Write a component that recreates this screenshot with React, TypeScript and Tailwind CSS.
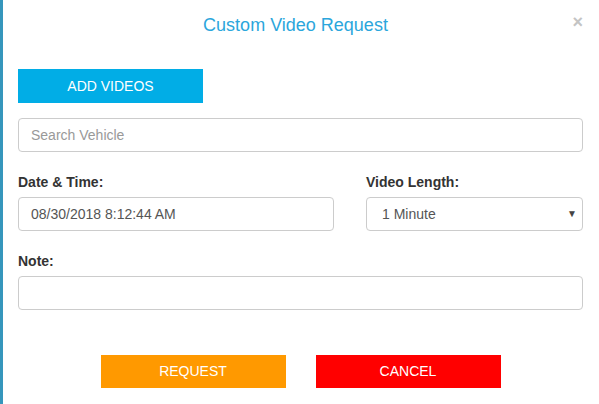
import React from 'react';

const inputCls =
    'w-full h-[34px] rounded-[4px] border border-[#cccccc] bg-white px-3 text-[14px] text-[#555555] placeholder:text-[#999999] outline-none';

const labelCls = 'block text-[14px] leading-[20px] font-bold text-[#333333] mb-[5px]';

const App: React.FC = () => {
    return (
        <div className="flex w-[599px] h-[404px] bg-white overflow-hidden" style={{ fontFamily: '"Liberation Sans", Arial, sans-serif' }}>
            {/* left edge of the page behind the modal */}
            <div className="w-[3px] shrink-0 bg-[#3596bc]" />

            <div className="flex-1 pl-[15px] pr-[16px]">
                {/* Header */}
                <div className="relative h-[50px] flex items-center justify-center">
                    <h4 className="mr-[10px] text-[18px] text-[#2ba6dc] font-normal">Custom Video Request</h4>
                    <button className="absolute right-[0px] top-[13px] text-[18px] leading-none font-bold text-[#c4c4c4]" aria-label="Close">
                        ×
                    </button>
                </div>

                <button className="mt-[19px] w-[185px] h-[34px] bg-[#01ade6] text-white text-[14px]">ADD VIDEOS</button>

                <div className="mt-[15px]">
                    <input className={inputCls} placeholder="Search Vehicle" />
                </div>

                <div className="mt-[20px] flex gap-[32px]">
                    <div className="w-[316px]">
                        <label className={labelCls}>Date &amp; Time:</label>
                        <input className={inputCls} defaultValue="08/30/2018 8:12:44 AM" />
                    </div>
                    <div className="flex-1">
                        <label className={labelCls}>Video Length:</label>
                        <div className="relative">
                            <select className={`${inputCls} appearance-none pl-[15px]`} defaultValue="1">
                                <option value="1">1 Minute</option>
                                <option value="2">2 Minutes</option>
                            </select>
                            <span className="pointer-events-none absolute right-[6px] top-[9px] text-[10px] text-[#444444]">▼</span>
                        </div>
                    </div>
                </div>

                <div className="mt-[20px]">
                    <label className={labelCls}>Note:</label>
                    <input className={inputCls} />
                </div>

                <div className="mt-[45px] flex justify-center gap-[30px]">
                    <button className="w-[185px] h-[33px] bg-[#ff9900] text-white text-[14px]">REQUEST</button>
                    <button className="w-[185px] h-[33px] bg-[#ff0000] text-white text-[14px]">CANCEL</button>
                </div>
            </div>
        </div>
    );
};

export default App;
